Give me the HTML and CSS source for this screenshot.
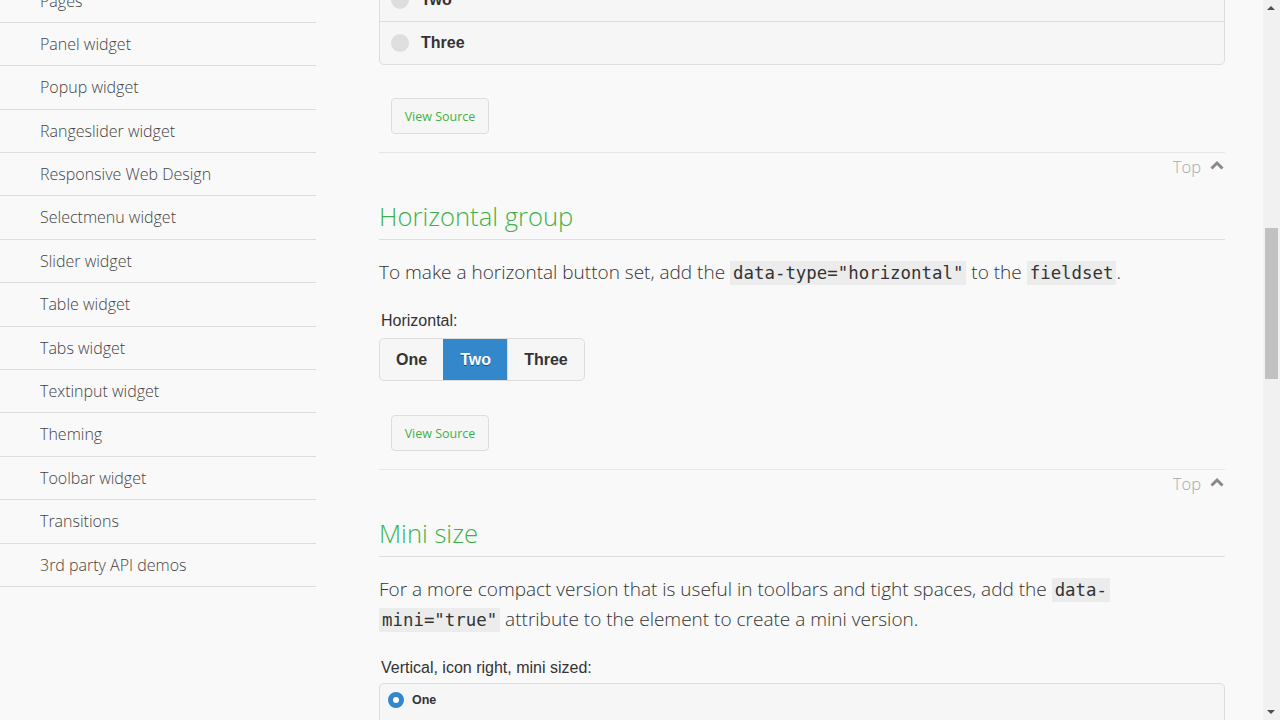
FILE: index.html
```html
<!DOCTYPE html>
<html lang="en">
<head>
<meta charset="utf-8">
<title>Controlgroup</title>
<link rel="stylesheet" href="styles.css">
</head>
<body>
<div class="viewport">
  <div class="page">
    <aside class="sidebar">
      <ul class="nav">
        <li>Pages</li>
        <li>Panel widget</li>
        <li>Popup widget</li>
        <li>Rangeslider widget</li>
        <li>Responsive Web Design</li>
        <li>Selectmenu widget</li>
        <li>Slider widget</li>
        <li>Table widget</li>
        <li>Tabs widget</li>
        <li>Textinput widget</li>
        <li>Theming</li>
        <li>Toolbar widget</li>
        <li>Transitions</li>
        <li>3rd party API demos</li>
      </ul>
    </aside>
    <main class="content">
      <div class="vgroup">
        <div class="vrow"><span class="radio"></span>Two</div>
        <div class="vrow"><span class="radio"></span>Three</div>
      </div>
      <div class="vs-wrap"><span class="vs-btn">View Source</span></div>
      <hr class="sep">
      <div class="toplink"><span>Top</span><svg class="caret" width="14" height="10" viewBox="0 0 14 10"><polyline points="1.5,8.5 7,3 12.5,8.5" fill="none" stroke="#8a8a8a" stroke-width="3"/></svg></div>

      <h2 class="title">Horizontal group</h2>
      <p class="text">To make a horizontal button set, add the <code>data-type="horizontal"</code> to the <code>fieldset</code>.</p>
      <div class="legend">Horizontal:</div>
      <div class="hgroup">
        <span class="hbtn">One</span><span class="hbtn active">Two</span><span class="hbtn">Three</span>
      </div>
      <div class="vs-wrap"><span class="vs-btn">View Source</span></div>
      <hr class="sep">
      <div class="toplink"><span>Top</span><svg class="caret" width="14" height="10" viewBox="0 0 14 10"><polyline points="1.5,8.5 7,3 12.5,8.5" fill="none" stroke="#8a8a8a" stroke-width="3"/></svg></div>

      <h2 class="title">Mini size</h2>
      <p class="text">For a more compact version that is useful in toolbars and tight spaces, add the <code>data-</code><br><code>mini="true"</code> attribute to the element to create a mini version.</p>
      <div class="legend">Vertical, icon right, mini sized:</div>
      <div class="vgroup mini">
        <div class="vrow"><span class="radio on"></span>One</div>
        <div class="vrow"><span class="radio"></span>Two</div>
      </div>
    </main>
  </div>
  <div class="scrollbar">
    <div class="sb-arrow up"></div>
    <div class="sb-track"><div class="sb-thumb"></div></div>
    <div class="sb-arrow down"></div>
  </div>
</div>
</body>
</html>
```
FILE: styles.css
```css
* { box-sizing: border-box; }
html, body { margin: 0; padding: 0; }
body {
  background: #f9f9f9;
  font-family: "Open Sans", "Liberation Sans", sans-serif;
  color: #333;
  overflow: hidden;
}
.viewport {
  display: flex;
  width: 1280px;
  height: 720px;
  overflow: hidden;
}
.page {
  flex: 1;
  display: flex;
  align-items: flex-start;
  overflow: hidden;
}
.sidebar {
  width: 316px;
  flex: none;
}
.nav {
  list-style: none;
  margin: -20.5px 0 0 0;
  padding: 0;
}
.nav li {
  height: 43.4px;
  border-bottom: 1px solid #ddd;
  padding: 0 0 0 40px;
  line-height: 42.4px;
  font-size: 16px;
  font-weight: 300;
  color: #444;
}
.content {
  width: 846px;
  margin-left: 63px;
  flex: none;
  margin-top: -22px;
}
.vgroup {
  border: 1px solid #ddd;
  border-radius: 5px;
  background: #f6f6f6;
  font-family: "Liberation Sans", Arial, sans-serif;
  font-weight: bold;
  font-size: 16px;
  color: #333;
  text-shadow: 0 1px 0 #f3f3f3;
}
.vrow {
  display: flex;
  align-items: center;
  height: 42px;
  padding-left: 11px;
}
.vrow + .vrow { border-top: 1px solid #ddd; height: 43px; }
.radio {
  width: 18px;
  height: 18px;
  border-radius: 50%;
  background: #dedede;
  margin-right: 12px;
  flex: none;
}
.vgroup.mini { font-size: 12.5px; }
.vgroup.mini .vrow { height: 38px; padding-left: 8px; padding-bottom: 6px; }
.vgroup.mini .radio { width: 16px; height: 16px; margin-right: 8px; }
.radio.on {
  background: #fff;
  border: 5px solid #38c;
}
.vs-wrap {
  padding: 33px 0 0 12px;
  height: 87px;
}
.vs-btn {
  display: inline-flex;
  align-items: center;
  justify-content: center;
  width: 98px;
  height: 36px;
  border: 1px solid #ddd;
  border-radius: 4px;
  background: #f6f6f6;
  color: #3eb249;
  font-size: 12.5px;
  font-weight: 400;
}
.sep {
  border: 0;
  border-top: 1px solid #e6e6e6;
  margin: 0;
  height: 0;
}
.toplink {
  display: flex;
  justify-content: flex-end;
  align-items: center;
  height: 26px;
  gap: 9px;
  padding-right: 1px;
  font-size: 16.5px;
  font-weight: 300;
  color: #a4a9b0;
}
.caret { display: block; margin-top: -2px; }
.title {
  margin: 21px 0 0 0;
  font-size: 25.6px;
  line-height: 34px;
  font-weight: 300;
  color: #3eb249;
  padding-bottom: 5px;
  border-bottom: 1px solid #ddd;
}
.text {
  margin: 18px 0 0 0;
  font-size: 19px;
  line-height: 29px;
  font-weight: 300;
  color: #333;
}
code {
  font-family: "DejaVu Sans Mono", monospace;
  font-size: 17.4px;
  background: #ececec;
  padding: 2px 3px;
  color: #333;
}
.legend {
  margin: 23px 0 0 2px;
  font-family: "Liberation Sans", Arial, sans-serif;
  font-size: 16px;
  line-height: 20px;
  color: #333;
}
.hgroup {
  display: inline-flex;
  margin-top: 7px;
  border: 1px solid #ddd;
  border-radius: 5px;
  overflow: hidden;
  background: #f6f6f6;
}
.hbtn {
  display: block;
  padding: 0 16px;
  height: 41px;
  line-height: 41px;
  font-family: "Liberation Sans", Arial, sans-serif;
  font-weight: bold;
  font-size: 16px;
  color: #333;
  text-shadow: 0 1px 0 #f3f3f3;
}
.hbtn + .hbtn { border-left: 1px solid #ddd; }
.hbtn.active {
  background: #38c;
  color: #fff;
  text-shadow: 0 1px 0 #059;
  border-left-color: #38c;
  width: 64px;
  text-align: center;
}
.hgroup + .vs-wrap { padding-top: 34px; height: 88px; }
.legend + .vgroup { margin-top: 5px; }
.scrollbar {
  width: 17px;
  flex: none;
  height: 720px;
  background: #f1f1f1;
  display: flex;
  flex-direction: column;
}
.sb-arrow { height: 17px; flex: none; position: relative; }
.sb-arrow::after {
  content: "";
  position: absolute;
  left: 4px;
  width: 0; height: 0;
  border-left: 4px solid transparent;
  border-right: 4px solid transparent;
}
.sb-arrow.up::after { top: 6px; border-bottom: 4px solid #505050; }
.sb-arrow.down::after { top: 7px; border-top: 4px solid #505050; }
.sb-track { flex: 1; padding: 211px 2px 0 2px; }
.sb-thumb { height: 151px; background: #c1c1c1; }
```
